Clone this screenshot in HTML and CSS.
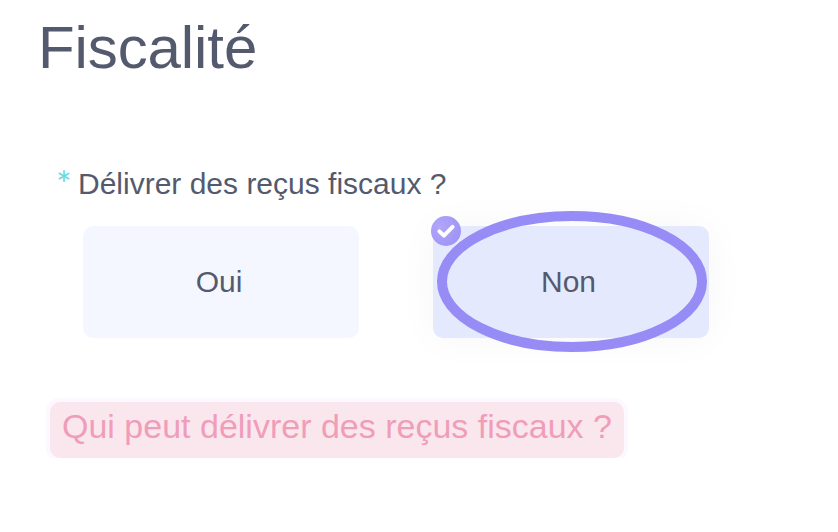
FILE: index.html
```html
<!DOCTYPE html>
<html lang="fr">
<head>
    <meta charset="utf-8">
    <title>Fiscalité</title>
    <link rel="stylesheet" href="styles.css">
</head>
<body>
    <div class="container">
        <h1 class="title">Fiscalité</h1>

        <p class="question"><span class="required">*</span>Délivrer des reçus fiscaux ?</p>

        <div class="choices">
            <div class="choice">Oui</div>
            <div class="choice selected">
                Non
                <svg class="ring" width="270" height="141" viewBox="0 0 270 141">
                    <ellipse cx="135" cy="70.5" rx="130" ry="65.5" fill="none" stroke="#978bf5" stroke-width="10"/>
                </svg>
                <span class="badge">
                    <svg width="30" height="30" viewBox="0 0 30 30">
                        <path d="M8.4 15.4 L12.9 19.6 L21.6 10.9" fill="none" stroke="#fff" stroke-width="4" stroke-linecap="round" stroke-linejoin="round"/>
                    </svg>
                </span>
            </div>
        </div>

        <div class="note">Qui peut délivrer des reçus fiscaux ?</div>
    </div>
</body>
</html>
```

FILE: styles.css
```css
body {
    margin: 0;
    background-color: #fff;
    color: #545a6d;
    font-family: "Liberation Sans", Arial, sans-serif;
    overflow: hidden;
}

.container {
    padding: 13px 38px 0;
}

.title {
    margin: 0;
    font-size: 60px;
    font-weight: normal;
    line-height: 70px;
    letter-spacing: -0.1px;
}

.question {
    display: flex;
    height: 36px;
    margin: 83px 0 0 18px;
    font-size: 30px;
    line-height: 36px;
}

.required {
    width: 22px;
    color: #6fd9e2;
    font-family: Lato, sans-serif;
    font-size: 37px;
}

.choices {
    display: flex;
    gap: 74px;
    margin: 24px 0 0 45px;
}

.choice {
    display: flex;
    justify-content: center;
    align-items: center;
    box-sizing: border-box;
    width: 276px;
    height: 112px;
    padding-right: 4px;
    border-radius: 10px;
    background-color: #f4f7ff;
    font-size: 30px;
}

.selected {
    position: relative;
    padding-right: 5px;
    background-color: #e4e9fd;
    box-shadow: 0 0 40px rgba(0, 0, 0, 0.04);
}

.ring {
    position: absolute;
    top: -15px;
    left: 4px;
}

.badge {
    position: absolute;
    top: -10px;
    left: -2px;
    width: 30px;
    height: 30px;
    border-radius: 50%;
    background: radial-gradient(circle at 30% 35%, #b0a6fb, #9c8ff3);
}

.note {
    box-sizing: border-box;
    width: 574px;
    height: 56px;
    margin: 64px 0 0 12px;
    padding-left: 12px;
    border-radius: 10px;
    background-color: #fae7ed;
    box-shadow: 0 0 0 4px #fdf8ff;
    color: #f09dba;
    font-size: 34px;
    line-height: 48px;
    white-space: nowrap;
}
```
